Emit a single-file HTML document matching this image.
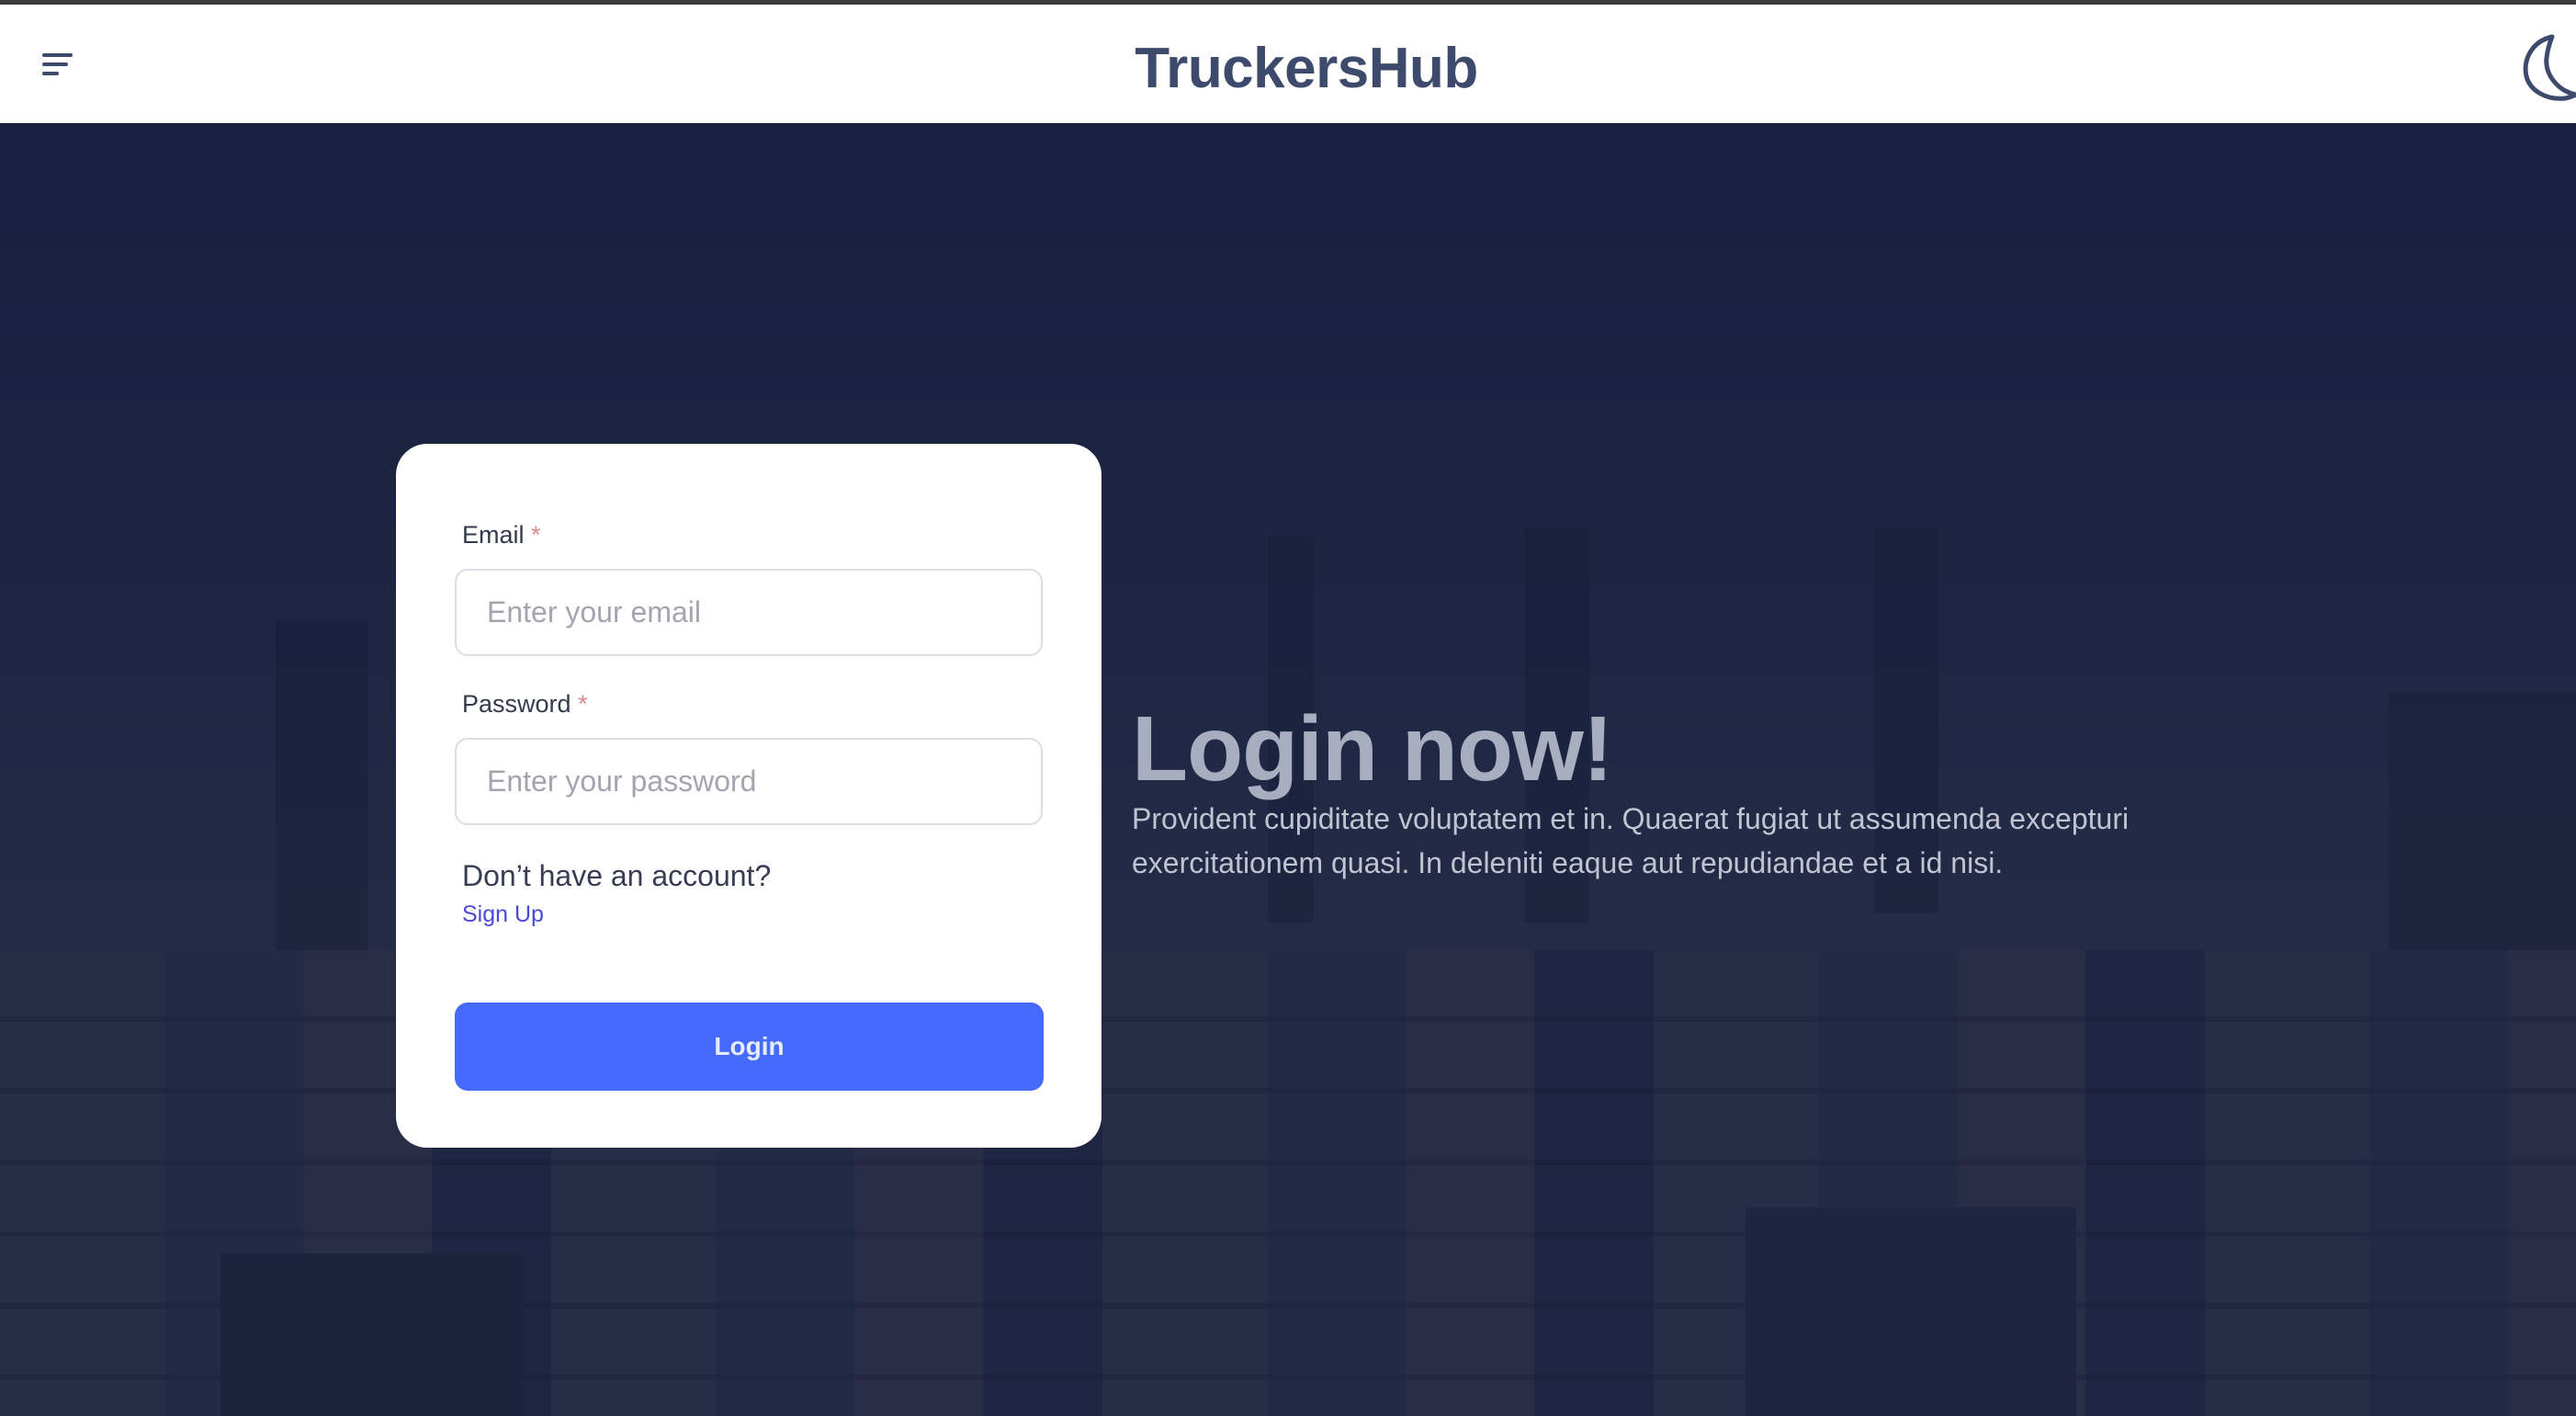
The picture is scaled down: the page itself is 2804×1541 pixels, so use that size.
<!DOCTYPE html>
<html><head><meta charset="utf-8"><style>
*{margin:0;padding:0;box-sizing:border-box}
body{width:2804px;height:1541px;overflow:hidden;font-family:"Liberation Sans",sans-serif;position:relative;background:#1b2341}
.topbar{position:absolute;left:0;top:0;width:2804px;height:5px;background:#3c3c3c}
header{position:absolute;left:0;top:5px;width:2804px;height:129px;background:#fff}
.logo{position:absolute;left:0;width:2804px;top:34px;text-align:center;font-size:62px;font-weight:bold;color:#3d4a6b;letter-spacing:-0.5px;padding-left:40px}
.bg{position:absolute;left:0;top:134px;width:2804px;height:1407px;background:linear-gradient(180deg,#19203f 0%,#1e2644 40%,#252b46 60%,#232a44 100%);overflow:hidden}
.b{position:absolute}
.card{position:absolute;left:431px;top:483px;width:768px;height:766px;background:#fff;border-radius:34px}
.lbl{position:absolute;left:72px;font-size:27px;color:#333a4d}
.lbl span{color:#d98a8a}
.inp{position:absolute;left:64px;width:640px;height:95px;border:2px solid #dcdce2;border-radius:14px;font-size:32px;color:#a2a4b0;padding-left:33px;line-height:91px}
.q{position:absolute;left:72px;top:452px;font-size:32px;color:#373d52}
.su{position:absolute;left:72px;top:498px;font-size:25px;color:#4a49d6}
.btn{position:absolute;left:64px;top:608px;width:641px;height:96px;background:#4669fe;border-radius:14px;color:#e6ecff;font-size:28px;font-weight:bold;text-align:center;line-height:96px}
h1{position:absolute;left:1232px;top:758px;font-size:100px;font-weight:bold;color:#a8adbf;letter-spacing:-1px}
p.d{position:absolute;left:1232px;top:867px;width:1180px;font-size:32px;line-height:48px;color:#c0c4d2}
</style></head><body>
<div class="topbar"></div>
<header>
<svg style="position:absolute;left:46px;top:52px" width="34" height="26" viewBox="0 0 34 26"><g stroke="#3d4a6b" stroke-width="4" stroke-linecap="round"><line x1="2" y1="3" x2="31" y2="3"/><line x1="2" y1="13" x2="26" y2="13"/><line x1="2" y1="23" x2="16" y2="23"/></g></svg>
<div class="logo">TruckersHub</div>
<svg style="position:absolute;left:2744px;top:32px" width="60" height="74" viewBox="0 0 60 74"><path d="M34 3 C12 8 2 28 6 46 C10 62 28 72 48 70 C54 69 58 67 60 66 C40 62 26 44 28 26 C29 16 32 8 34 3 Z" fill="none" stroke="#3d4a6b" stroke-width="5" stroke-linejoin="round"/></svg>
</header>
<div class="bg">
<div class="b" style="left:1380px;top:450px;width:50px;height:420px;background:#151b33;opacity:.35"></div>
<div class="b" style="left:1660px;top:440px;width:70px;height:430px;background:#151b33;opacity:.35"></div>
<div class="b" style="left:2040px;top:440px;width:70px;height:420px;background:#151b33;opacity:.35"></div>
<div class="b" style="left:300px;top:540px;width:100px;height:400px;background:#151b33;opacity:.35"></div>
<div class="b" style="left:2600px;top:620px;width:204px;height:300px;background:#1a2038;opacity:.45"></div>
<div class="b" style="left:0;top:900px;width:2804px;height:507px;background:repeating-linear-gradient(90deg,#272d47 0 180px,#232a46 180px 330px,#2a2d46 330px 470px,#1f2643 470px 600px)"></div>
<div class="b" style="left:0;top:900px;width:2804px;height:507px;background:repeating-linear-gradient(180deg,rgba(0,0,0,0) 0 72px,rgba(10,14,34,.15) 72px 78px);"></div>
<div class="b" style="left:240px;top:1230px;width:330px;height:177px;background:#1d233c"></div>
<div class="b" style="left:1900px;top:1180px;width:360px;height:227px;background:#1f2541"></div>
</div>
<div class="card">
<div class="lbl" style="top:84px">Email <span>*</span></div>
<div class="inp" style="top:136px">Enter your email</div>
<div class="lbl" style="top:268px">Password <span>*</span></div>
<div class="inp" style="top:320px">Enter your password</div>
<div class="q">Don’t have an account?</div>
<div class="su">Sign Up</div>
<div class="btn">Login</div>
</div>
<h1>Login now!</h1>
<p class="d">Provident cupiditate voluptatem et in. Quaerat fugiat ut assumenda excepturi exercitationem quasi. In deleniti eaque aut repudiandae et a id nisi.</p>
</body></html>
